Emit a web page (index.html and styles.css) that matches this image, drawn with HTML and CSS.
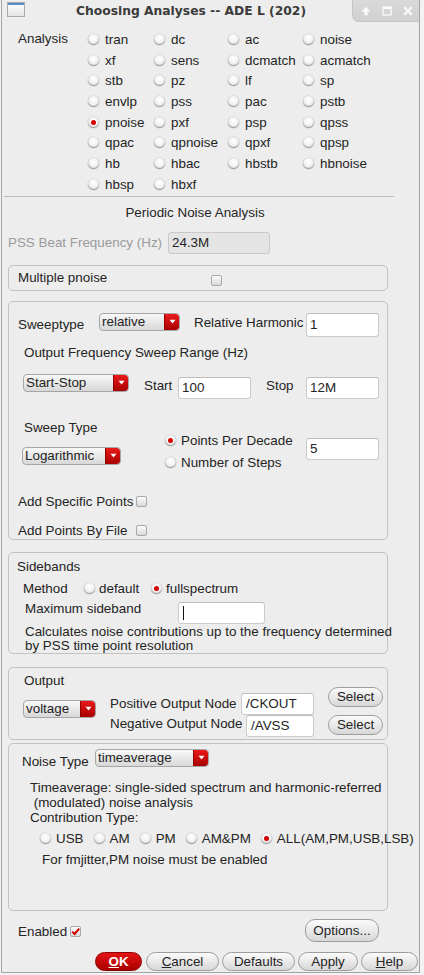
FILE: index.html
```html
<!DOCTYPE html>
<html>
<head>
<meta charset="utf-8">
<link rel="stylesheet" href="styles.css">
</head>
<body>
<div class="window">
  <div class="titlebar">
    <div class="app-icon"><div class="app-icon-band"></div></div>
    <div class="title">Choosing Analyses -- ADE L (202)</div>
    <div class="wm-controls">
      <svg class="wm-icon" width="10" height="10" viewBox="0 0 10 10"><path d="M5 0.8 L9.4 5.4 H6.6 V9.2 H3.4 V5.4 H0.6 Z" fill="#fafafa"/></svg>
      <svg class="wm-icon" width="10" height="10" viewBox="0 0 10 10"><rect x="1" y="1" width="8" height="8" fill="none" stroke="#fafafa" stroke-width="1.3"/><rect x="1" y="1" width="8" height="2" fill="#fafafa"/></svg>
      <svg class="wm-icon" width="10" height="10" viewBox="0 0 10 10"><path d="M1.2 1.2 L8.8 8.8 M8.8 1.2 L1.2 8.8" stroke="#fafafa" stroke-width="2.1"/></svg>
    </div>
  </div>

  <div class="analysis">
    <div class="analysis-label">Analysis</div>
    <div class="analysis-grid">
      <div class="opt"><span class="radio"></span>tran</div>
      <div class="opt"><span class="radio"></span>dc</div>
      <div class="opt"><span class="radio"></span>ac</div>
      <div class="opt"><span class="radio"></span>noise</div>
      <div class="opt"><span class="radio"></span>xf</div>
      <div class="opt"><span class="radio"></span>sens</div>
      <div class="opt"><span class="radio"></span>dcmatch</div>
      <div class="opt"><span class="radio"></span>acmatch</div>
      <div class="opt"><span class="radio"></span>stb</div>
      <div class="opt"><span class="radio"></span>pz</div>
      <div class="opt"><span class="radio"></span>lf</div>
      <div class="opt"><span class="radio"></span>sp</div>
      <div class="opt"><span class="radio"></span>envlp</div>
      <div class="opt"><span class="radio"></span>pss</div>
      <div class="opt"><span class="radio"></span>pac</div>
      <div class="opt"><span class="radio"></span>pstb</div>
      <div class="opt"><span class="radio on"></span>pnoise</div>
      <div class="opt"><span class="radio"></span>pxf</div>
      <div class="opt"><span class="radio"></span>psp</div>
      <div class="opt"><span class="radio"></span>qpss</div>
      <div class="opt"><span class="radio"></span>qpac</div>
      <div class="opt"><span class="radio"></span>qpnoise</div>
      <div class="opt"><span class="radio"></span>qpxf</div>
      <div class="opt"><span class="radio"></span>qpsp</div>
      <div class="opt"><span class="radio"></span>hb</div>
      <div class="opt"><span class="radio"></span>hbac</div>
      <div class="opt"><span class="radio"></span>hbstb</div>
      <div class="opt"><span class="radio"></span>hbnoise</div>
      <div class="opt"><span class="radio"></span>hbsp</div>
      <div class="opt"><span class="radio"></span>hbxf</div>
    </div>
  </div>

  <div class="sep"></div>
  <div class="section-title">Periodic Noise Analysis</div>

  <div class="pss-row">
    <span class="pss-label">PSS Beat Frequency (Hz)</span>
    <span class="field field-disabled pss-field">24.3M</span>
  </div>

  <div class="group multi">
    <span class="multi-label">Multiple pnoise</span>
    <span class="checkbox multi-check"></span>
  </div>

  <div class="group sweep">
    <div class="row sweeptype-row">
      <span class="lbl sweeptype-label">Sweeptype</span>
      <div class="combo combo-relative"><span class="combo-text">relative</span><span class="combo-btn"><svg width="7" height="5" viewBox="0 0 7 5"><path d="M0.5 0.8 H6.5 L3.5 4.4 Z" fill="#fff"/></svg></span></div>
      <span class="lbl harmonic-label">Relative Harmonic</span>
      <span class="field field-73">1</span>
    </div>
    <div class="lbl range-title">Output Frequency Sweep Range (Hz)</div>
    <div class="row startstop-row">
      <div class="combo combo-startstop"><span class="combo-text">Start-Stop</span><span class="combo-btn"><svg width="7" height="5" viewBox="0 0 7 5"><path d="M0.5 0.8 H6.5 L3.5 4.4 Z" fill="#fff"/></svg></span></div>
      <span class="lbl start-label">Start</span>
      <span class="field field-73 start-field">100</span>
      <span class="lbl stop-label">Stop</span>
      <span class="field field-73 start-field">12M</span>
    </div>
    <div class="row sweeptype-block">
      <div class="st-left">
        <div class="lbl st-label">Sweep Type</div>
        <div class="combo combo-log"><span class="combo-text">Logarithmic</span><span class="combo-btn"><svg width="7" height="5" viewBox="0 0 7 5"><path d="M0.5 0.8 H6.5 L3.5 4.4 Z" fill="#fff"/></svg></span></div>
      </div>
      <div class="st-mid">
        <div class="st-opt"><span class="radio on"></span>Points Per Decade</div>
        <div class="st-opt"><span class="radio"></span>Number of Steps</div>
      </div>
      <span class="field field-73 st-field">5</span>
    </div>
    <div class="row add-row add-specific">
      <span class="lbl add-label">Add Specific Points</span>
      <span class="checkbox"></span>
    </div>
    <div class="row add-row add-file">
      <span class="lbl add-label">Add Points By File</span>
      <span class="checkbox"></span>
    </div>
  </div>

  <div class="group sidebands">
    <div class="lbl sb-title">Sidebands</div>
    <div class="row method-row">
      <span class="lbl method-label">Method</span>
      <span class="method-opt method-default"><span class="radio"></span>default</span>
      <span class="method-opt"><span class="radio on"></span>fullspectrum</span>
    </div>
    <div class="row maxsb-row">
      <span class="lbl maxsb-label">Maximum sideband</span>
      <span class="field maxsb-field"><span class="caret"></span></span>
    </div>
    <div class="calc-text">Calculates noise contributions up to the frequency determined<br>by PSS time point resolution</div>
  </div>

  <div class="group output">
    <div class="out-left">
      <div class="lbl out-title">Output</div>
      <div class="combo combo-voltage"><span class="combo-text">voltage</span><span class="combo-btn"><svg width="7" height="5" viewBox="0 0 7 5"><path d="M0.5 0.8 H6.5 L3.5 4.4 Z" fill="#fff"/></svg></span></div>
    </div>
    <div class="out-right">
      <div class="row out-row out-row1">
        <span class="lbl pos-label">Positive Output Node</span>
        <span class="field pos-field">/CKOUT</span>
        <span class="btn select-btn">Select</span>
      </div>
      <div class="row out-row out-row2">
        <span class="lbl neg-label">Negative Output Node</span>
        <span class="field neg-field">/AVSS</span>
        <span class="btn select-btn">Select</span>
      </div>
    </div>
  </div>

  <div class="group noise">
    <div class="row noise-row">
      <span class="lbl noise-label">Noise Type</span>
      <div class="combo combo-noise"><span class="combo-text">timeaverage</span><span class="combo-btn"><svg width="7" height="5" viewBox="0 0 7 5"><path d="M0.5 0.8 H6.5 L3.5 4.4 Z" fill="#fff"/></svg></span></div>
    </div>
    <div class="noise-text">Timeaverage: single-sided spectrum and harmonic-referred<br>&nbsp;(modulated) noise analysis<br>Contribution Type:</div>
    <div class="row contrib-row">
      <span class="contrib-opt"><span class="radio"></span>USB</span>
      <span class="contrib-opt"><span class="radio"></span>AM</span>
      <span class="contrib-opt"><span class="radio"></span>PM</span>
      <span class="contrib-opt"><span class="radio"></span>AM&amp;PM</span>
      <span class="contrib-opt"><span class="radio on"></span>ALL(AM,PM,USB,LSB)</span>
    </div>
    <div class="fm-note">For fmjitter,PM noise must be enabled</div>
  </div>

  <div class="row enabled-row">
    <span class="lbl enabled-label">Enabled</span>
    <span class="checkbox checked"><svg width="11" height="11" viewBox="0 0 11 11"><path d="M2.2 5.6 L4.6 8 L9.2 2.6" fill="none" stroke="#d30000" stroke-width="2"/></svg></span>
    <span class="btn options-btn">Options...</span>
  </div>

  <div class="row button-row">
    <span class="btn ok-btn"><u>O</u>K</span>
    <span class="btn cancel-btn"><u>C</u>ancel</span>
    <span class="btn defaults-btn">Defaults</span>
    <span class="btn apply-btn">Apply</span>
    <span class="btn help-btn"><u>H</u>elp</span>
  </div>
</div>
</body>
</html>
```

FILE: styles.css
```css
* { box-sizing: border-box; }
html, body { margin: 0; padding: 0; }
body {
  width: 424px;
  height: 975px;
  overflow: hidden;
  background: #f3f3f3;
  font-family: "Liberation Sans", Arial, sans-serif;
  font-size: 13.4px;
  color: #242424;
}
.window {
  margin-left: 1px;
  width: 419px;
  height: 973px;
  background: #ededed;
  border: 1px solid #a4a4a4;
  border-top: none;
  overflow: hidden;
  display: flex;
  flex-direction: column;
}
.titlebar {
  height: 24px;
  display: flex;
  align-items: flex-start;
  flex: none;
}
.app-icon {
  margin: 2px 0 0 5px;
  width: 18px;
  height: 15px;
  border: 1px solid #a9a9a9;
  background: linear-gradient(#ffffff, #e4e4e4);
  flex: none;
}
.app-icon-band { height: 2px; background: #5b8cc8; }
.title {
  flex: 1;
  text-align: center;
  padding: 4px 0 0 5px;
  font-family: "DejaVu Sans", sans-serif;
  font-weight: bold;
  font-size: 12.3px;
  line-height: 14px;
  color: #3b3b3b;
}
.wm-controls {
  width: 67px;
  height: 22px;
  flex: none;
  background: linear-gradient(#dadada, #d0d0d0);
  border-left: 1px solid #c4c4c4;
  border-bottom: 1px solid #c4c4c4;
  border-bottom-left-radius: 7px;
  display: flex;
  align-items: center;
  padding-left: 8px;
  gap: 11px;
}
.wm-icon { display: block; }

/* Analysis grid */
.analysis {
  display: flex;
  margin-top: 5px;
  padding-left: 16px;
  flex: none;
}
.analysis-label { width: 70px; line-height: 20.7px; }
.analysis-grid {
  display: grid;
  grid-template-columns: 66px 74px 75px 80px;
  grid-auto-rows: 20.7px;
}
.opt { display: flex; align-items: center; white-space: nowrap; }
.opt .radio { margin-right: 6px; }

.radio {
  display: inline-block;
  width: 11px;
  height: 11px;
  border-radius: 50%;
  background: radial-gradient(circle at 50% 35%, #ffffff 0, #f3f3f3 45%, #d4d4d4 100%);
  box-shadow: inset 0 -1px 1px #9c9c9c, 0 0 0 0.6px #c9c9c9;
  flex: none;
}
.radio.on::after {
  content: "";
  display: block;
  width: 5px;
  height: 5px;
  margin: 3px;
  border-radius: 50%;
  background: #d60000;
}

.checkbox {
  display: inline-block;
  width: 11px;
  height: 11px;
  border: 1px solid #a8a8a8;
  border-radius: 2px;
  background: linear-gradient(#fdfdfd, #d9d9d9);
  flex: none;
}
.checkbox svg { display: block; margin: -1px; }

.sep {
  height: 1px;
  width: 390px;
  margin: 1px 0 0 2px;
  background: #bdbdbd;
  flex: none;
}
.section-title {
  width: 386px;
  text-align: center;
  line-height: 16px;
  margin-top: 8px;
}

.row { display: flex; flex: none; }
.lbl { line-height: 16px; white-space: nowrap; flex: none; }

.field {
  display: inline-block;
  height: 22px;
  line-height: 20px;
  padding-left: 3px;
  background: #ffffff;
  border: 1px solid #cbcbcb;
  border-top-color: #bdbdbd;
  border-radius: 3px;
  flex: none;
  white-space: nowrap;
}
.field-disabled { background: #e4e4e4; border-color: #c9c9c9; }
.field-73 { width: 73px; }

.pss-row {
  display: flex;
  align-items: center;
  height: 22px;
  margin-top: 11px;
  padding-left: 6px;
  flex: none;
}
.pss-label { width: 160px; color: #9b9b9b; white-space: nowrap; }
.pss-field { width: 102px; }

.group {
  margin-left: 6px;
  width: 380px;
  border: 1px solid #c3c3c3;
  border-radius: 5px;
  flex: none;
}

.multi {
  margin-top: 11px;
  height: 26px;
  display: flex;
  align-items: center;
  padding-left: 9px;
}
.multi-label { width: 193px; }
.multi-check { margin-top: 5px; }

/* combo boxes */
.combo {
  display: flex;
  height: 18px;
  border: 1px solid #a6a6a6;
  border-radius: 4px;
  background: linear-gradient(#f8f8f8, #d8d8d8);
  overflow: hidden;
  flex: none;
}
.combo-text {
  flex: 1;
  padding-left: 2px;
  line-height: 16px;
  white-space: nowrap;
}
.combo-btn {
  width: 15px;
  background: linear-gradient(#ea1a1a, #a80000);
  border-left: 1px solid #900000;
  border-radius: 0 3px 3px 0;
  display: flex;
  align-items: center;
  justify-content: center;
}
.combo-btn svg { display: block; }

/* sweep group */
.sweep {
  margin-top: 10px;
  height: 239px;
  padding: 11px 0 0 9px;
}
.sweeptype-row { align-items: flex-start; height: 24px; }
.sweeptype-label { width: 81px; margin-top: 4px; }
.combo-relative { width: 81px; }
.harmonic-label { margin-left: 14px; width: 112px; margin-top: 2px; }
.sweeptype-row .field { height: 24px; line-height: 22px; }
.range-title { margin: 8px 0 0 6px; }
.startstop-row { margin-top: 13px; align-items: flex-start; height: 25px; }
.combo-startstop { margin-left: 5px; width: 106px; }
.start-label { margin: 4px 0 0 15px; width: 34px; }
.stop-label { margin: 4px 0 0 15px; width: 40px; }
.start-field { margin-top: 3px; }
.sweeptype-block { margin-top: 21px; align-items: flex-start; margin-left: 4px; }
.st-left { width: 143px; }
.st-label { padding-left: 2px; }
.combo-log { width: 99px; margin-top: 11px; }
.st-mid { width: 141px; margin-top: 10px; }
.st-opt { height: 22px; display: flex; align-items: center; white-space: nowrap; }
.st-opt .radio { margin-right: 5px; }
.st-field { margin-top: 18px; }
.add-row { align-items: center; height: 16px; }
.add-specific { margin-top: 20px; }
.add-file { margin-top: 13px; }
.add-label { width: 118px; }

/* sidebands */
.sidebands {
  margin-top: 12px;
  height: 102px;
  padding: 6px 0 0 8px;
}
.method-row { margin-top: 6px; height: 16px; align-items: center; }
.method-label { margin-left: 6px; width: 61px; }
.method-opt { display: flex; align-items: center; white-space: nowrap; }
.method-opt .radio { margin-right: 4px; }
.method-default { width: 67px; }
.maxsb-row { margin-top: 4px; align-items: flex-start; }
.maxsb-label { margin-left: 8px; width: 153px; }
.maxsb-field { width: 87px; margin-top: 1px; padding-left: 4px; display: flex; align-items: center; }
.caret { display: block; width: 1px; height: 14px; background: #111; }
.calc-text {
  margin: 1px 0 0 8px;
  line-height: 14px;
  white-space: nowrap;
}

/* output */
.output {
  margin-top: 13px;
  height: 73px;
  padding: 5px 0 0 9px;
  display: flex;
  align-items: flex-start;
}
.out-left { width: 92px; flex: none; }
.out-title { margin-left: 6px; }
.combo-voltage { margin: 11px 0 0 5px; width: 73px; }
.out-right { margin-top: 14px; }
.out-row { align-items: flex-start; }
.out-row1 { height: 28px; }
.out-row2 { height: 22px; }
.pos-label { width: 131px; margin-top: 9px; }
.neg-label { width: 136px; margin-top: 1px; }
.pos-field { width: 73px; margin-top: 6px; padding-left: 4px; }
.neg-field { width: 68px; padding-left: 4px; }

.btn {
  display: inline-flex;
  align-items: center;
  justify-content: center;
  border: 1px solid #9d9d9d;
  border-radius: 10px;
  background: linear-gradient(#fbfbfb, #d7d7d7);
  white-space: nowrap;
  flex: none;
  color: #242424;
}
.select-btn { width: 55px; height: 20px; margin-left: 14px; }

/* noise */
.noise {
  margin-top: 3px;
  height: 168px;
  padding: 5px 0 0 9px;
}
.noise-row { align-items: flex-start; }
.noise-label { margin: 5px 0 0 4px; width: 73px; }
.combo-noise { width: 114px; }
.noise-text {
  margin: 10px 0 0 12px;
  line-height: 15.3px;
  white-space: nowrap;
}
.contrib-row { margin: 5.5px 0 0 22px; height: 16px; align-items: center; }
.contrib-opt { display: flex; align-items: center; white-space: nowrap; margin-right: 10px; }
.contrib-opt .radio { margin-right: 5px; }
.fm-note { margin: 5px 0 0 24px; line-height: 16px; white-space: nowrap; }

/* bottom */
.enabled-row {
  margin-top: 8px;
  height: 23px;
  padding-left: 16px;
  align-items: flex-start;
}
.enabled-label { width: 52px; margin-top: 5px; }
.enabled-row .checkbox { margin-top: 7px; }
.options-btn { margin-left: auto; margin-right: 40px; width: 74px; height: 23px; }

.button-row {
  margin-top: 10px;
  height: 19px;
  justify-content: flex-end;
  padding-right: 1px;
}
.button-row .btn { height: 19px; }
.ok-btn {
  width: 47px;
  background: linear-gradient(#e61414, #a90000);
  border-color: #8e0000;
  color: #ffffff;
  font-weight: bold;
}
.cancel-btn { width: 73px; margin-left: 4px; }
.defaults-btn { width: 73px; margin-left: 3px; }
.apply-btn { width: 60px; margin-left: 3px; }
.help-btn { width: 57px; margin-left: 3px; }
```
